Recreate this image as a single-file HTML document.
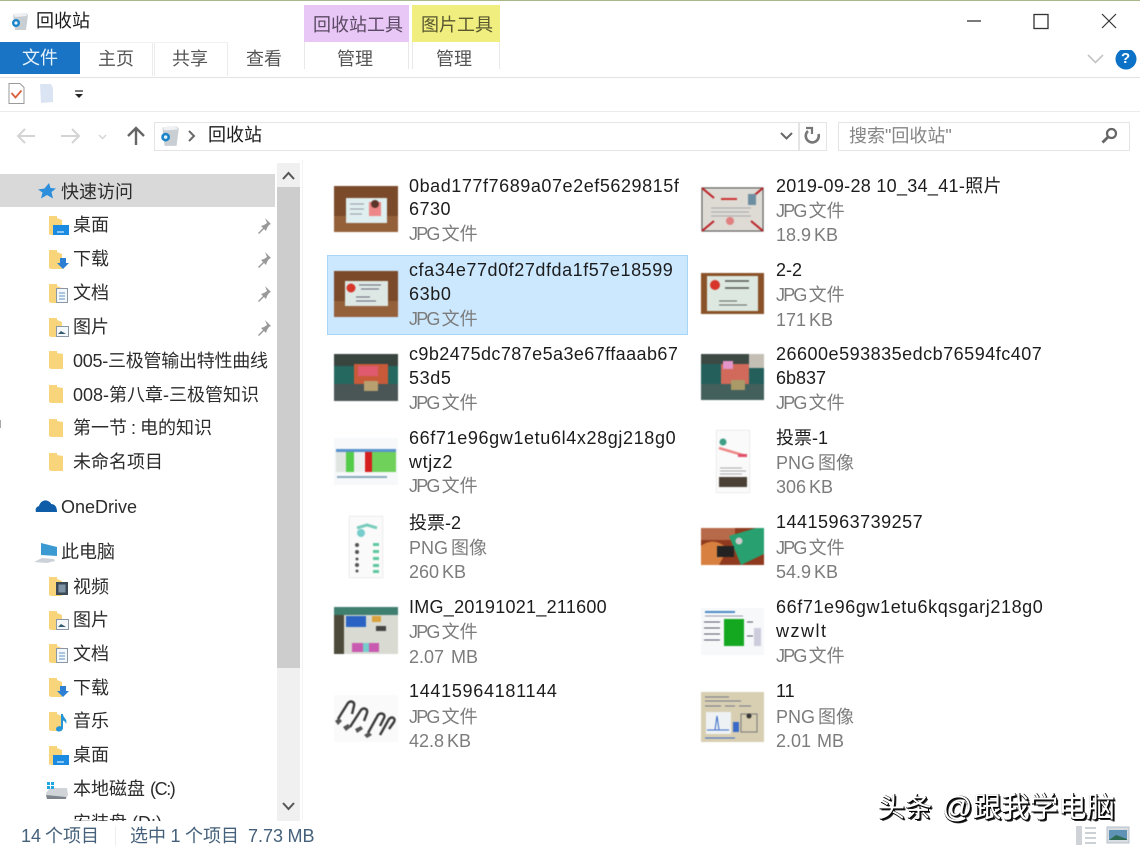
<!DOCTYPE html>
<html lang="zh"><head><meta charset="utf-8"><title>回收站</title>
<style>
html,body{margin:0;padding:0;background:#fff}
#w{position:relative;width:1140px;height:847px;overflow:hidden;background:#fff;font-family:"Liberation Sans","Noto Sans CJK SC",sans-serif;font-size:18px;color:#222}
#w div,#w svg{position:absolute}
.t{white-space:nowrap;line-height:24px;height:24px}
.g{color:#7c7c7c;word-spacing:-2px}
.g b{font-weight:normal;letter-spacing:-1.8px}
.d{color:#1c1c1c}
.tab{color:#555;text-align:center;top:47px;width:70px}
.n{left:73px;color:#2c2c2c}
#w svg.th{filter:blur(.6px)}
.wm{white-space:nowrap;line-height:32px;height:32px;top:792px;color:#fff;text-shadow:1px 1px 0 #000,1px 0 0 #000,0 1px 0 #000,2px 2px 0 #222}
</style></head><body><div id="w">
<div style="left:0;top:0;width:1140px;height:1px;background:#a9b88c"></div>

<!-- title bar -->
<svg style="left:9px;top:10px" width="22" height="22" viewBox="0 0 22 22"><path d="M4 4l13-1 2 2-2 15H6z" fill="#c9ced3"/><path d="M4 4l13-1 1 3-12 1z" fill="#eef1f3"/><circle cx="7" cy="13" r="4" fill="#1b84c9"/><circle cx="7" cy="13" r="1.6" fill="#e8f4fb"/></svg>
<div class="t d" style="left:36px;top:9px">回收站</div>
<div style="left:304px;top:5px;width:105px;height:37px;background:#e8c6f5"></div>
<div style="left:412px;top:5px;width:88px;height:37px;background:#efee7e"></div>
<div class="t" style="left:313px;top:13px;color:#5b4a63">回收站工具</div>
<div class="t" style="left:421px;top:13px;color:#59572f">图片工具</div>
<div style="left:304px;top:42px;width:1px;height:27px;background:#e8e8e8"></div>
<div style="left:408px;top:42px;width:1px;height:27px;background:#e8e8e8"></div>
<div style="left:412px;top:42px;width:1px;height:27px;background:#e8e8e8"></div>
<div style="left:499px;top:42px;width:1px;height:27px;background:#e8e8e8"></div>
<svg style="left:960px;top:8px" width="170" height="28" viewBox="0 0 170 28"><path d="M7 13h14" stroke="#333" stroke-width="1.3"/><rect x="74" y="6.5" width="14" height="14" fill="none" stroke="#333" stroke-width="1.3"/><path d="M142 6l14 14M156 6l-14 14" stroke="#333" stroke-width="1.2"/></svg>

<!-- ribbon tabs -->
<div style="left:0;top:42px;width:80px;height:32px;background:#1a74c6"></div>
<div class="t" style="left:22px;top:46px;color:#e6f1fa">文件</div>
<div style="left:80px;top:42px;width:72px;height:33px;border-right:1px solid #ececec;border-top:1px solid #f2f2f2"></div>
<div style="left:154px;top:42px;width:72px;height:33px;border-right:1px solid #ececec;border-top:1px solid #f2f2f2;border-left:1px solid #ececec"></div>
<div class="t tab" style="left:81px">主页</div>
<div class="t tab" style="left:155px">共享</div>
<div class="t tab" style="left:229px">查看</div>
<div class="t tab" style="left:320px">管理</div>
<div class="t tab" style="left:419px">管理</div>
<div style="left:0;top:77px;width:1140px;height:1px;background:#e3e3e3"></div>
<svg style="left:1086px;top:50px" width="54" height="20" viewBox="0 0 54 20"><path d="M2 5l7.500 7.500L17 5" fill="none" stroke="#c4c4c4" stroke-width="1.600"/><circle cx="40" cy="9" r="10.500" fill="#0c72c8"/></svg>
<div class="t" style="left:1121px;top:47px;color:#fff;font-weight:bold;font-size:15px">?</div>

<!-- quick access toolbar -->
<svg style="left:8px;top:82px" width="80" height="24" viewBox="0 0 80 24"><path d="M1 1.500h11l4 4v16H1z" fill="#fff" stroke="#9a9a9a"/><path d="M3.500 11l4 4.500 6-7" fill="none" stroke="#d9603c" stroke-width="1.800"/><path d="M32 2h11l2 4v14l-12 1z" fill="#dbe4f2"/><path d="M67 9h8" stroke="#222" stroke-width="1.200"/><path d="M67 12h8l-4 4z" fill="#222"/></svg>
<div style="left:0;top:111px;width:1140px;height:1px;background:#ebebeb"></div>

<!-- nav -->
<svg style="left:14px;top:124px" width="134" height="24" viewBox="0 0 134 24"><path d="M21 12H4M11 5l-7 7 7 7" fill="none" stroke="#d4d4d4" stroke-width="2"/><path d="M47 12h17M58 5l7 7-7 7" fill="none" stroke="#d4d4d4" stroke-width="2"/><path d="M85 11l3.500 3.500L92 11" fill="none" stroke="#d4d4d4" stroke-width="1.400"/><path d="M122 21V5M114 12l8-8 8 8" fill="none" stroke="#666" stroke-width="2.400"/></svg>
<div style="left:154px;top:122px;width:644px;height:27px;border:1px solid #e4e4e4"></div>
<div style="left:798px;top:122px;width:27px;height:27px;border:1px solid #e4e4e4"></div>
<svg style="left:158px;top:124px" width="24" height="24" viewBox="0 0 22 22"><path d="M4 3l13-1 2 2-2 16H6z" fill="#c9ced3"/><path d="M4 3l13-1 1 3-12 1z" fill="#eef1f3"/><circle cx="7" cy="12" r="4" fill="#1b84c9"/><circle cx="7" cy="12" r="1.600" fill="#e8f4fb"/></svg>
<svg style="left:186px;top:128px" width="12" height="16" viewBox="0 0 12 16"><path d="M3 3l5 5-5 5" fill="none" stroke="#6a6a6a" stroke-width="2"/></svg>
<div class="t d" style="left:208px;top:123px">回收站</div>
<svg style="left:778px;top:128px" width="18" height="16" viewBox="0 0 18 16"><path d="M3 5l5.500 5.500L14 5" fill="none" stroke="#666" stroke-width="2"/></svg>
<svg style="left:803px;top:126px" width="20" height="20" viewBox="0 0 20 20"><path d="M15.500 8A6.500 6.500 0 1 1 5 5" fill="none" stroke="#777" stroke-width="2.600"/><path d="M3 2h6v6" fill="none" stroke="#777" stroke-width="2.200"/></svg>
<div style="left:838px;top:122px;width:290px;height:27px;border:1px solid #e4e4e4"></div>
<div class="t" style="left:849px;top:124px;color:#858585">搜索"回收站"</div>
<svg style="left:1100px;top:126px" width="20" height="20" viewBox="0 0 20 20"><circle cx="11.500" cy="7.500" r="4.500" fill="none" stroke="#666" stroke-width="2.200"/><path d="M8 11l-5.500 5.500" stroke="#666" stroke-width="2.800"/></svg>

<!-- sidebar -->
<div style="left:0;top:174px;width:275px;height:33px;background:#d9d9d9"></div>
<svg style="left:37px;top:182px" width="19" height="18" viewBox="0 0 19 18"><path d="M12 1l1.500 5L19 6.500l-4.500 3.500 1.500 6.500-6-3.500-6 3.500 1.500-6L1 7.500l6.500-1z" fill="#2d8fdb"/></svg>
<div class="t n" style="left:61px;top:180px">快速访问</div>

<svg style="left:48px;top:215px" width="22" height="22" viewBox="0 0 22 22"><path d="M1 1h8v2l5 2v15H3l-2-1z" fill="#f8d57a"/><rect x="5" y="10" width="16" height="10" fill="#1a8be0"/><path d="M9 17h7" stroke="#fff"/></svg>
<div class="t n" style="top:213px">桌面</div>
<svg style="left:48px;top:249px" width="22" height="22" viewBox="0 0 22 22"><path d="M1 1h8v2l5 2v15H3l-2-1z" fill="#f8d57a"/><path d="M12 9h6v5h3l-6 6-6-6h3z" fill="#2d7fd3"/></svg>
<div class="t n" style="top:247px">下载</div>
<svg style="left:48px;top:283px" width="22" height="22" viewBox="0 0 22 22"><path d="M1 1h8v2l5 2v15H3l-2-1z" fill="#f8d57a"/><rect x="8.500" y="5.500" width="11" height="14" fill="#f5f8fb" stroke="#8b97a5"/><path d="M11 10h6M11 13h6M11 16h6" stroke="#5e93c6"/></svg>
<div class="t n" style="top:281px">文档</div>
<svg style="left:48px;top:317px" width="22" height="22" viewBox="0 0 22 22"><path d="M1 1h8v2l5 2v15H3l-2-1z" fill="#f8d57a"/><rect x="8.500" y="9.500" width="12" height="10" fill="#f5f8fb" stroke="#8b97a5"/><path d="M10 17l3-3 5 3z" fill="#355a6f"/></svg>
<div class="t n" style="top:315px">图片</div>
<svg style="left:256px;top:217px" width="16" height="120" viewBox="0 0 16 120" fill="#999"><path d="M9 1l6 6-2 1-2 3-1 3-2-2-5 5-1-1 5-5-2-2 3-1 3-2z"/><path d="M9 35l6 6-2 1-2 3-1 3-2-2-5 5-1-1 5-5-2-2 3-1 3-2z"/><path d="M9 69l6 6-2 1-2 3-1 3-2-2-5 5-1-1 5-5-2-2 3-1 3-2z"/><path d="M9 103l6 6-2 1-2 3-1 3-2-2-5 5-1-1 5-5-2-2 3-1 3-2z"/></svg>

<svg style="left:48px;top:350px" width="16" height="122" viewBox="0 0 16 122" fill="#f8d57a"><path d="M1 1h8v2l6 1v15H3l-2-1z"/><path d="M1 35h8v2l6 1v15H3l-2-1z"/><path d="M1 69h8v2l6 1v15H3l-2-1z"/><path d="M1 103h8v2l6 1v15H3l-2-1z"/></svg>
<div class="t n" style="top:349px;letter-spacing:-.25px">005-三极管输出特性曲线</div>
<div class="t n" style="top:383px">008-第八章-三极管知识</div>
<div class="t n" style="top:416px;word-spacing:-1px">第一节 : 电的知识</div>
<div class="t n" style="top:450px">未命名项目</div>
<div style="left:0;top:420px;width:1px;height:8px;background:#aaa"></div>

<svg style="left:35px;top:498px" width="23" height="16" viewBox="0 0 23 16"><path d="M1 14c-1-3 0-5 3-6 1-4 5-7 9-5 2 1 3 2 3 3 4 0 6 3 6 8z" fill="#0f5ca8"/></svg>
<div class="t n" style="left:61px;top:495px">OneDrive</div>
<svg style="left:34px;top:542px" width="24" height="22" viewBox="0 0 24 22"><path d="M7 1l16 4v9l-16-1z" fill="#3c9ad3"/><path d="M0 20l8-4 12 1 1 2-8 2z" fill="#ccd2d8"/></svg>
<div class="t n" style="left:61px;top:540px">此电脑</div>

<svg style="left:48px;top:576px" width="22" height="22" viewBox="0 0 22 22"><path d="M1 1h8v2l5 2v15H3l-2-1z" fill="#f8d57a"/><rect x="8" y="6" width="12" height="13" fill="#3c4a58"/><rect x="10.500" y="8.500" width="7" height="8" fill="#7e93a5"/></svg>
<div class="t n" style="top:575px">视频</div>
<svg style="left:48px;top:610px" width="22" height="22" viewBox="0 0 22 22"><path d="M1 1h8v2l5 2v15H3l-2-1z" fill="#f8d57a"/><rect x="8.500" y="9.500" width="12" height="10" fill="#f5f8fb" stroke="#8b97a5"/><path d="M10 17l3-3 5 3z" fill="#355a6f"/></svg>
<div class="t n" style="top:608px">图片</div>
<svg style="left:48px;top:643px" width="22" height="22" viewBox="0 0 22 22"><path d="M1 1h8v2l5 2v15H3l-2-1z" fill="#f8d57a"/><rect x="8.500" y="5.500" width="11" height="14" fill="#f5f8fb" stroke="#8b97a5"/><path d="M11 10h6M11 13h6M11 16h6" stroke="#5e93c6"/></svg>
<div class="t n" style="top:642px">文档</div>
<svg style="left:48px;top:677px" width="22" height="22" viewBox="0 0 22 22"><path d="M1 1h8v2l5 2v15H3l-2-1z" fill="#f8d57a"/><path d="M12 9h6v5h3l-6 6-6-6h3z" fill="#2d7fd3"/></svg>
<div class="t n" style="top:676px">下载</div>
<svg style="left:48px;top:711px" width="22" height="22" viewBox="0 0 22 22"><path d="M1 1h8v2l5 2v15H3l-2-1z" fill="#f8d57a"/><path d="M13 3h2c0 4 5 5 3 10-.5-2-1.500-3-3-3.500V17c0 2-2 3.500-4 3.500s-3-1-3-2.500c0-2 3-3.500 5-2.500z" fill="#2496d8"/></svg>
<div class="t n" style="top:709px">音乐</div>
<svg style="left:48px;top:745px" width="22" height="22" viewBox="0 0 22 22"><path d="M1 1h8v2l5 2v15H3l-2-1z" fill="#f8d57a"/><rect x="5" y="10" width="16" height="10" fill="#1a8be0"/><path d="M9 17h7" stroke="#fff"/></svg>
<div class="t n" style="top:743px">桌面</div>
<svg style="left:45px;top:781px" width="24" height="20" viewBox="0 0 24 20"><path d="M1 12l4-5h17l1 7-2 4H2z" fill="#d0d4d8"/><path d="M1 14l20 2v2H2z" fill="#7d838a"/><path d="M2 1h3v3H2zM6 1h3v3H6zM2 5h3v3H2zM6 5h3v3H6z" fill="#20a7e2"/></svg>
<div class="t n" style="top:777px">本地磁盘 <span style="letter-spacing:-1.4px">(C:)</span></div>
<div class="t n" style="top:811px">安装盘 (D:)</div>

<!-- scrollbar -->
<div style="left:277px;top:163px;width:23px;height:658px;background:#f0f0f0"></div>
<div style="left:277px;top:187px;width:23px;height:481px;background:#cdcdcd"></div>
<div style="left:302px;top:160px;width:1px;height:660px;background:#f3f3f3"></div>
<svg style="left:277px;top:165px" width="23" height="652" viewBox="0 0 23 652"><path d="M6 14l5.500-6 5.500 6" fill="none" stroke="#555" stroke-width="2"/><path d="M6 638l5.500 6 5.500-6" fill="none" stroke="#555" stroke-width="2"/></svg>

<!-- status -->
<div style="left:0;top:821px;width:1140px;height:26px;background:#fff"></div>
<div class="t" style="left:21px;top:824px;color:#45607a;word-spacing:-1px">14 个项目</div>
<div style="left:115px;top:826px;width:1px;height:20px;background:#eee"></div>
<div class="t" style="left:130px;top:824px;color:#45607a;word-spacing:-.5px">选中 1 个项目&nbsp; 7.73 MB</div>
<svg style="left:1075px;top:825px" width="62" height="22" viewBox="0 0 62 22"><rect x="1" y="1" width="6" height="19" fill="#cfd3d7"/><path d="M10 3h11M10 8h11M10 13h11M10 18h11" stroke="#9aa3ab"/><rect x="32" y="2" width="22" height="16" fill="#d8dde2" stroke="#b8c0c8"/><rect x="34" y="5" width="18" height="10" fill="#5f93b5"/><path d="M34 15l7-5 11 4v1z" fill="#2e6b53"/></svg>

<!-- selected item -->
<div style="left:327px;top:255px;width:359px;height:78px;background:#cce8ff;border:1px solid #a8d4f5"></div>

<!-- thumbs -->
<svg class="th" style="left:334px;top:186px" width="64" height="46" viewBox="0 0 64 46"><rect width="64" height="46" fill="#7a4a2a"/><rect y="30" width="64" height="16" fill="#93603a"/><rect x="12" y="12" width="41" height="25" fill="#dfeeee"/><rect x="35" y="16" width="12" height="14" fill="#e88"/><circle cx="41" cy="18" r="4" fill="#5a3528"/><path d="M16 18h14M16 23h14M16 28h12" stroke="#99a"/></svg>
<svg class="th" style="left:334px;top:271px" width="64" height="46" viewBox="0 0 64 46"><rect width="64" height="46" fill="#7a4a2a"/><rect y="30" width="64" height="16" fill="#93603a"/><rect x="11" y="10" width="43" height="25" fill="#dde8e4"/><circle cx="17" cy="17" r="4.500" fill="#d8352a"/><path d="M25 14h22M27 18h18M22 26h14M22 30h20" stroke="#667"/></svg>
<svg class="th" style="left:334px;top:354px" width="64" height="47" viewBox="0 0 64 47"><rect width="64" height="47" fill="#24685f"/><rect y="0" width="64" height="12" fill="#38443e"/><rect x="20" y="10" width="34" height="20" fill="#c85a3a"/><rect x="24" y="12" width="20" height="10" fill="#df5a6f"/><rect x="0" y="30" width="64" height="17" fill="#4a5556"/><rect x="30" y="27" width="14" height="10" fill="#b8a070"/></svg>
<svg class="th" style="left:334px;top:438px" width="64" height="47" viewBox="0 0 64 47"><rect width="64" height="47" fill="#f6f8fa"/><rect x="2" y="11" width="60" height="3" fill="#5a93cd"/><rect x="2" y="14" width="10" height="20" fill="#dfe5e0"/><rect x="12" y="14" width="8" height="20" fill="#53cc4a"/><rect x="20" y="14" width="10" height="20" fill="#eef0f0"/><rect x="31" y="14" width="7" height="20" fill="#d51e1e"/><rect x="38" y="14" width="24" height="20" fill="#6fd05a"/><path d="M3 39h50" stroke="#8ab" stroke-width="2"/></svg>
<svg class="th" style="left:349px;top:516px" width="34" height="62" viewBox="0 0 34 62"><rect width="34" height="62" fill="#fafafa" stroke="#ddd"/><path d="M8 12l10-3 10 3" stroke="#7cb" stroke-width="3" fill="none"/><circle cx="12" cy="17" r="4" fill="#7cc"/><g fill="#555"><circle cx="8" cy="29" r="2"/><circle cx="8" cy="36" r="2"/><circle cx="8" cy="43" r="1.500"/><circle cx="8" cy="49" r="2"/><circle cx="8" cy="55" r="1.500"/></g><g fill="#5cc8a0"><rect x="24" y="27" width="6" height="3"/><rect x="24" y="34" width="6" height="3"/><rect x="24" y="41" width="6" height="3"/><rect x="24" y="48" width="6" height="3"/><rect x="24" y="54" width="6" height="3"/></g></svg>
<svg class="th" style="left:334px;top:607px" width="64" height="47" viewBox="0 0 64 47"><rect width="64" height="47" fill="#d9dad2"/><rect width="64" height="8" fill="#3f7f70"/><rect y="8" width="10" height="39" fill="#4c4a3a"/><rect x="12" y="9" width="20" height="11" fill="#2a63c4"/><rect x="38" y="9" width="9" height="6" fill="#d9a23c"/><rect x="42" y="19" width="10" height="5" fill="#444"/><rect x="18" y="36" width="11" height="9" fill="#c85ab0"/><rect x="29" y="36" width="6" height="9" fill="#7cc"/><rect x="35" y="36" width="10" height="9" fill="#c85ab0"/></svg>
<svg class="th" style="left:334px;top:695px" width="64" height="47" viewBox="0 0 64 47"><rect width="64" height="47" fill="#fafafa"/><g fill="none" stroke="#3a3a3a" stroke-width="2.400"><path d="M4 24L14 8c3-3 7-1 6 3l-2 8"/><path d="M16 32l11-17c3-3 7-1 6 3l-3 8"/><path d="M34 38l10-18c3-3 8-1 6 3l-4 8"/><path d="M46 40l9-16c3-3 7-1 5 3l-5 7"/></g><g fill="#555"><path d="M1 26l4-3 3 3-4 4zM9 32l5-3 3 3-5 4zM21 34l6-3 2 3-6 4zM30 40l5-3 3 3-5 3z"/></g></svg>

<svg class="th" style="left:701px;top:187px" width="63" height="45" viewBox="0 0 63 45"><rect width="63" height="45" fill="#dedbd5"/><rect x="1" y="1" width="61" height="43" fill="none" stroke="#555"/><path d="M1 1l12 10M62 1L50 11M1 44l12-10M62 44L50 34" stroke="#bb2226" stroke-width="2"/><rect x="47" y="7" width="8" height="11" fill="#6d8ea0"/><path d="M20 12h16" stroke="#c33" stroke-width="2"/><path d="M10 21h40M10 25h38M10 29h40" stroke="#aaa"/><circle cx="29" cy="34" r="4" fill="#e08080"/></svg>
<svg class="th" style="left:701px;top:273px" width="63" height="41" viewBox="0 0 63 41"><rect width="63" height="41" fill="#8a5228"/><rect x="6" y="3" width="51" height="35" fill="#dde8e0"/><circle cx="14" cy="12" r="5" fill="#d8352a"/><path d="M24 8h24M24 15h24" stroke="#555" stroke-width="1.500"/><path d="M18 28h18M18 32h28" stroke="#666"/></svg>
<svg class="th" style="left:701px;top:354px" width="63" height="46" viewBox="0 0 63 46"><rect width="63" height="46" fill="#245f5c"/><rect width="63" height="10" fill="#3d4a44"/><rect x="48" y="0" width="15" height="14" fill="#c4bfb5"/><rect x="20" y="10" width="28" height="20" fill="#d16a5a"/><rect x="22" y="7" width="10" height="8" fill="#e394c8"/><rect y="30" width="63" height="16" fill="#43605c"/><rect x="30" y="26" width="14" height="10" fill="#aa9a68"/></svg>
<svg class="th" style="left:716px;top:430px" width="34" height="63" viewBox="0 0 34 63"><rect width="34" height="63" fill="#fafafa" stroke="#ddd"/><circle cx="7" cy="12" r="3.500" fill="#3f9f86"/><path d="M3 18l27 8" stroke="#e88" stroke-width="2.500"/><rect x="22" y="24" width="9" height="3" fill="#e0506a"/><path d="M4 38h22M4 41h26M4 44h22" stroke="#aaa"/><rect x="3" y="47" width="28" height="10" fill="#4a4036"/></svg>
<svg class="th" style="left:701px;top:528px" width="63" height="37" viewBox="0 0 63 37"><rect width="63" height="37" fill="#8f3a1e"/><rect width="34" height="12" fill="#b76a4a"/><path d="M28 8L55 0h8v26L40 37z" fill="#28a070"/><path d="M0 18c10-8 22-4 26 4l-8 15H0z" fill="#d8803f"/><rect x="16" y="18" width="17" height="11" fill="#222"/><circle cx="38" cy="13" r="3.500" fill="#ccc"/></svg>
<svg class="th" style="left:701px;top:608px" width="63" height="47" viewBox="0 0 63 47"><rect width="63" height="47" fill="#f6f8fa"/><path d="M4 4h30" stroke="#4a8ac4" stroke-width="2"/><path d="M4 8h38" stroke="#99a"/><rect x="23" y="11" width="20" height="27" fill="#13a81f"/><path d="M3 14h16M3 20h16M3 26h16M3 32h16M46 14h6M46 28h6" stroke="#556"/><rect x="53" y="20" width="7" height="18" fill="#ccd"/></svg>
<svg class="th" style="left:701px;top:692px" width="63" height="50" viewBox="0 0 63 50"><rect width="63" height="50" fill="#d8cfb2"/><path d="M4 5h24M4 9h36M4 14h16M24 14h10M38 14h12" stroke="#778"/><rect x="5" y="20" width="25" height="22" fill="#eef2f5"/><path d="M6 38h22M14 38l2-14 2 14" stroke="#3a6ac8" fill="none"/><rect x="32" y="30" width="6" height="10" fill="#3a6ac8"/><path d="M40 22h16v18H40z" fill="none" stroke="#777"/><circle cx="48" cy="24" r="2.500" fill="#333"/><path d="M4 46h30" stroke="#3a6ac8"/></svg>

<!-- file labels left col -->
<div class="t d" style="left:409px;top:174px;letter-spacing:.56px">0bad177f7689a07e2ef5629815f</div>
<div class="t d" style="left:409px;top:197px;letter-spacing:.5px">6730</div>
<div class="t g" style="left:409px;top:222px"><b>JPG</b> 文件</div>
<div class="t d" style="left:409px;top:258px;letter-spacing:.56px">cfa34e77d0f27dfda1f57e18599</div>
<div class="t d" style="left:409px;top:282px;letter-spacing:.6px">63b0</div>
<div class="t g" style="left:409px;top:307px"><b>JPG</b> 文件</div>
<div class="t d" style="left:409px;top:342px;letter-spacing:.42px">c9b2475dc787e5a3e67ffaaab67</div>
<div class="t d" style="left:409px;top:366px;letter-spacing:.6px">53d5</div>
<div class="t g" style="left:409px;top:391px"><b>JPG</b> 文件</div>
<div class="t d" style="left:409px;top:426px;letter-spacing:.63px">66f71e96gw1etu6l4x28gj218g0</div>
<div class="t d" style="left:409px;top:450px;letter-spacing:.6px">wtjz2</div>
<div class="t g" style="left:409px;top:474px"><b>JPG</b> 文件</div>
<div class="t d" style="left:409px;top:511px">投票-2</div>
<div class="t g" style="left:409px;top:536px">PNG 图像</div>
<div class="t g" style="left:409px;top:560px">260 KB</div>
<div class="t d" style="left:409px;top:595px;letter-spacing:.27px">IMG_20191021_211600</div>
<div class="t g" style="left:409px;top:620px"><b>JPG</b> 文件</div>
<div class="t g" style="left:409px;top:645px;word-spacing:2px">2.07 MB</div>
<div class="t d" style="left:409px;top:679px;letter-spacing:.7px">14415964181144</div>
<div class="t g" style="left:409px;top:705px"><b>JPG</b> 文件</div>
<div class="t g" style="left:409px;top:729px">42.8 KB</div>

<!-- file labels right col -->
<div class="t d" style="left:776px;top:174px;letter-spacing:.3px">2019-09-28 10_34_41-照片</div>
<div class="t g" style="left:776px;top:199px"><b>JPG</b> 文件</div>
<div class="t g" style="left:776px;top:223px">18.9 KB</div>
<div class="t d" style="left:776px;top:258px">2-2</div>
<div class="t g" style="left:776px;top:283px"><b>JPG</b> 文件</div>
<div class="t g" style="left:776px;top:308px">171 KB</div>
<div class="t d" style="left:776px;top:342px;letter-spacing:.5px">26600e593835edcb76594fc407</div>
<div class="t d" style="left:776px;top:366px">6b837</div>
<div class="t g" style="left:776px;top:391px"><b>JPG</b> 文件</div>
<div class="t d" style="left:776px;top:426px">投票-1</div>
<div class="t g" style="left:776px;top:451px">PNG 图像</div>
<div class="t g" style="left:776px;top:475px">306 KB</div>
<div class="t d" style="left:776px;top:510px;letter-spacing:.5px">14415963739257</div>
<div class="t g" style="left:776px;top:536px"><b>JPG</b> 文件</div>
<div class="t g" style="left:776px;top:560px">54.9 KB</div>
<div class="t d" style="left:776px;top:595px;letter-spacing:.6px">66f71e96gw1etu6kqsgarj218g0</div>
<div class="t d" style="left:776px;top:619px;letter-spacing:1.5px">wzwlt</div>
<div class="t g" style="left:776px;top:644px"><b>JPG</b> 文件</div>
<div class="t d" style="left:776px;top:679px">11</div>
<div class="t g" style="left:776px;top:705px">PNG 图像</div>
<div class="t g" style="left:776px;top:729px;word-spacing:1px">2.01 MB</div>

<!-- watermark -->
<div class="wm" style="left:878px;font-size:27px">头条</div>
<div class="wm" style="left:942px;font-size:30px">@</div>
<div class="wm" style="left:973px;font-size:28.4px">跟我学电脑</div>
</div></body></html>
